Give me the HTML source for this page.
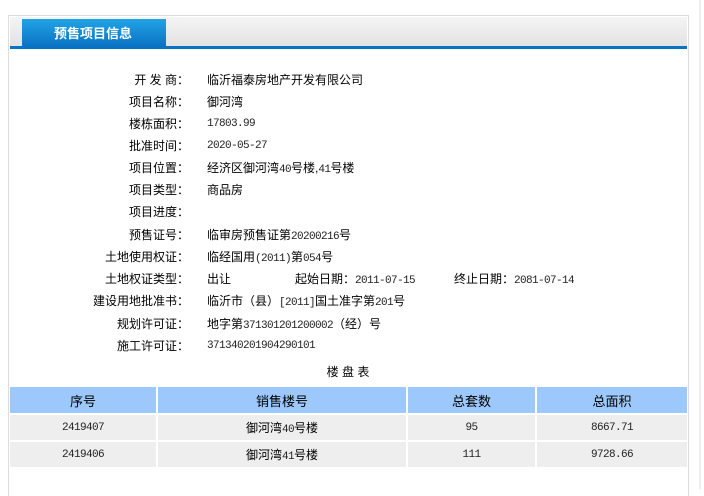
<!DOCTYPE html>
<html><head><meta charset="utf-8"><style>
body{margin:0;width:704px;height:489px;background:#fff;font-family:"Liberation Sans","Noto Sans CJK SC",sans-serif;font-size:12px;color:#000;position:relative;overflow:hidden}
.vline{position:absolute;left:699px;top:0;width:2px;height:489px;background:#eee}
.box{position:absolute;left:8px;top:15px;width:679px;height:480px;border:1px solid #ddd;border-bottom:none}
.hdr{position:absolute;left:1px;top:1px;width:677px;height:30px;background:linear-gradient(#f4f4f4,#e2e2e2)}
.tab{position:absolute;left:12px;top:2px;width:144px;height:28px;background:linear-gradient(#22a3e6,#0a72c2);color:#fff;font-weight:bold;font-size:13px;line-height:30px;text-indent:32px}
.bar{position:absolute;left:1px;top:30px;width:677px;height:3px;background:#0a72c2}
.row{position:absolute;left:0;height:22px;line-height:22px;white-space:nowrap}
.lab{position:absolute;left:0;text-align:right;width:189px}
.val{position:absolute;left:207px}
.m{font-family:"Liberation Mono",monospace;font-size:11px;letter-spacing:-0.6px;color:#222}
table{position:absolute;left:8px;top:385px;border-collapse:separate;border-spacing:2px;width:681px}
td{text-align:center;height:25px;padding:0;background:#eee}
tr.h td{background:#9cc8fb;height:26px;font-size:13px}
</style></head><body>
<div class="vline"></div>
<div class="box"><div class="hdr"><div class="tab">预售项目信息</div></div><div class="bar"></div></div>
<div class="row" style="top:69px"><span class="lab">开 发 商：</span><span class="val">临沂福泰房地产开发有限公司</span></div>
<div class="row" style="top:91px"><span class="lab">项目名称：</span><span class="val">御河湾</span></div>
<div class="row" style="top:113px"><span class="lab">楼栋面积：</span><span class="val m">17803.99</span></div>
<div class="row" style="top:135px"><span class="lab">批准时间：</span><span class="val m">2020-05-27</span></div>
<div class="row" style="top:157px"><span class="lab">项目位置：</span><span class="val">经济区御河湾<span class="m">40</span>号楼,<span class="m">41</span>号楼</span></div>
<div class="row" style="top:179px"><span class="lab">项目类型：</span><span class="val">商品房</span></div>
<div class="row" style="top:201px"><span class="lab">项目进度：</span></div>
<div class="row" style="top:224px"><span class="lab">预售证号：</span><span class="val">临审房预售证第<span class="m">20200216</span>号</span></div>
<div class="row" style="top:246px"><span class="lab">土地使用权证：</span><span class="val">临经国用<span class="m">(2011)</span>第<span class="m">054</span>号</span></div>
<div class="row" style="top:268px"><span class="lab">土地权证类型：</span><span class="val">出让</span><span style="position:absolute;left:295px">起始日期：<span class="m">2011-07-15</span></span><span style="position:absolute;left:454px">终止日期：<span class="m">2081-07-14</span></span></div>
<div class="row" style="top:290px"><span class="lab">建设用地批准书：</span><span class="val">临沂市（县）<span class="m">[2011]</span>国土准字第<span class="m">201</span>号</span></div>
<div class="row" style="top:313px"><span class="lab">规划许可证：</span><span class="val">地字第<span class="m">371301201200002</span>（经）号</span></div>
<div class="row" style="top:335px"><span class="lab">施工许可证：</span><span class="val m">371340201904290101</span></div>
<div class="row" style="top:361px;left:0;width:696px;text-align:center">楼 盘 表</div>
<table>
<tr class="h"><td style="width:146px">序号</td><td style="width:248px">销售楼号</td><td style="width:127px">总套数</td><td>总面积</td></tr>
<tr><td class="m">2419407</td><td>御河湾<span class="m">40</span>号楼</td><td class="m">95</td><td class="m">8667.71</td></tr>
<tr><td class="m">2419406</td><td>御河湾<span class="m">41</span>号楼</td><td class="m">111</td><td class="m">9728.66</td></tr>
</table>
</body></html>
